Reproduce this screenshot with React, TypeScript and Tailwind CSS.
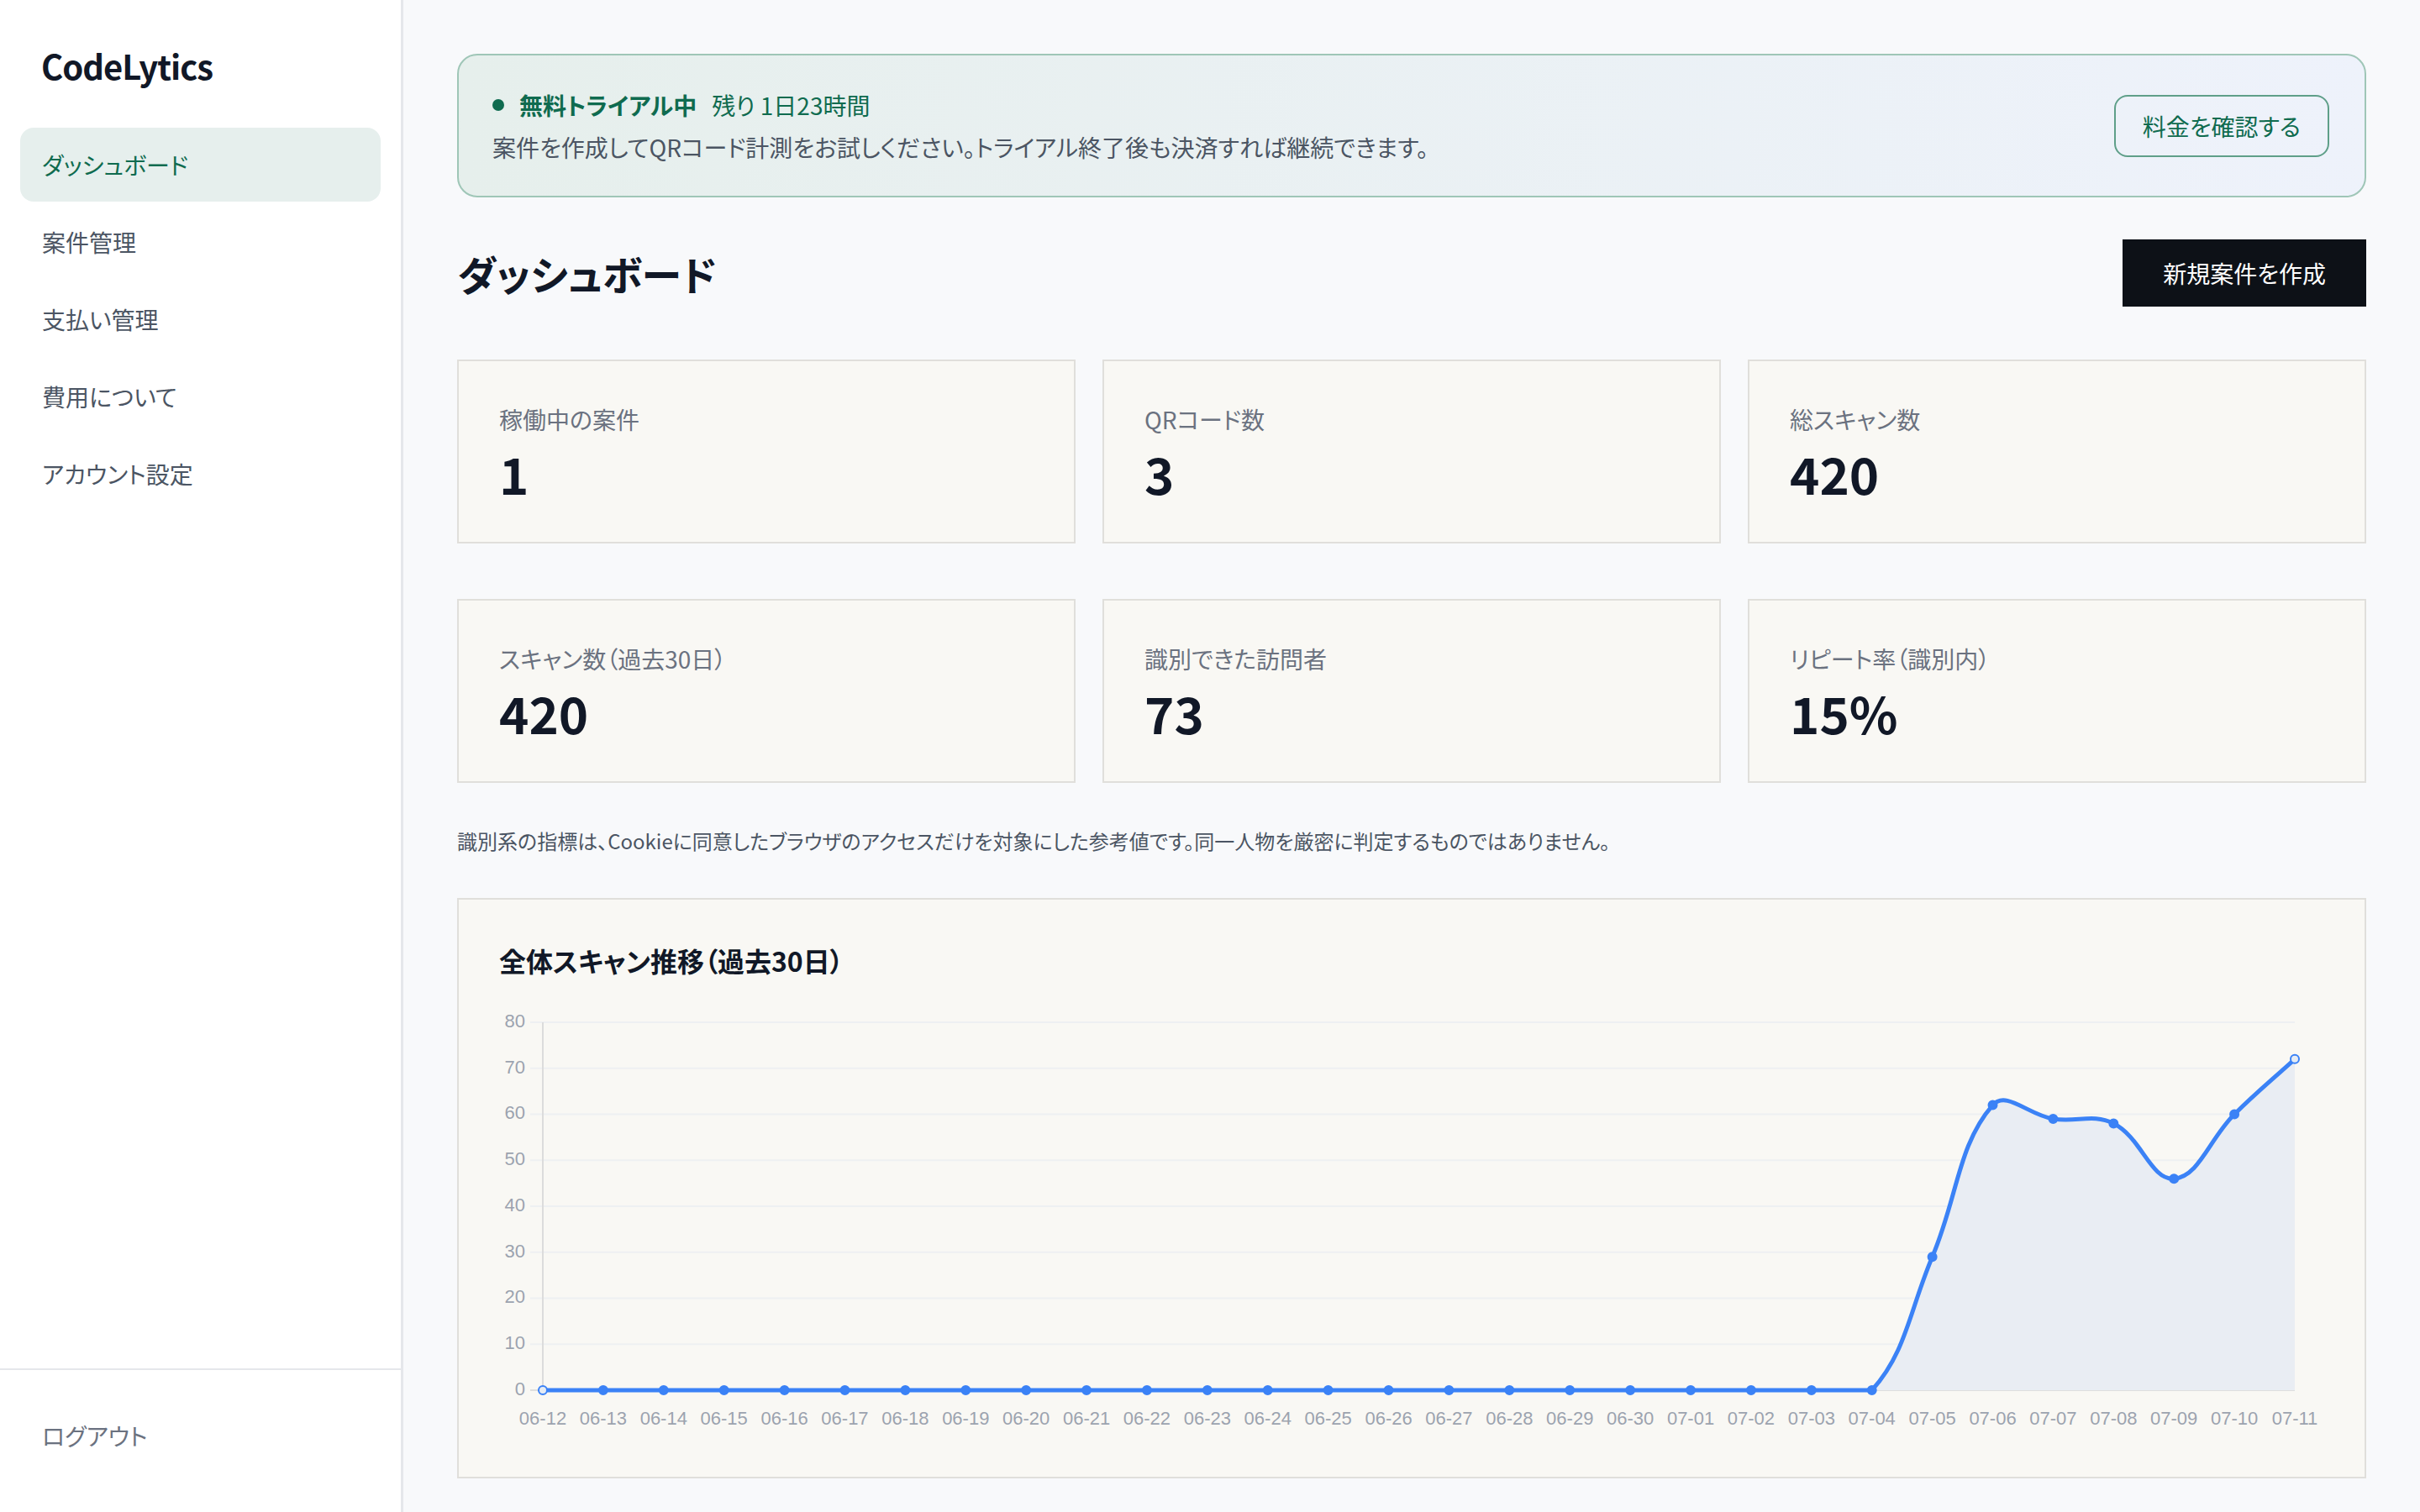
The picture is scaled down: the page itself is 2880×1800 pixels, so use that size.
import React from "react";

const navItems = ["ダッシュボード", "案件管理", "支払い管理", "費用について", "アカウント設定"];

const stats = [
  { label: "稼働中の案件", value: "1" },
  { label: "QRコード数", value: "3" },
  { label: "総スキャン数", value: "420" },
];

const stats30 = [
  { label: "スキャン数（過去30日）", value: "420" },
  { label: "識別できた訪問者", value: "73" },
  { label: "リピート率（識別内）", value: "15%" },
];

const dates = [
  "06-12", "06-13", "06-14", "06-15", "06-16", "06-17", "06-18", "06-19", "06-20", "06-21",
  "06-22", "06-23", "06-24", "06-25", "06-26", "06-27", "06-28", "06-29", "06-30", "07-01",
  "07-02", "07-03", "07-04", "07-05", "07-06", "07-07", "07-08", "07-09", "07-10", "07-11",
];
const values = [
  0, 0, 0, 0, 0, 0, 0, 0, 0, 0, 0, 0, 0, 0, 0, 0, 0, 0, 0, 0, 0, 0, 0, 29, 62, 59, 58, 46, 60, 72,
];

type Pt = { x: number; y: number };

function ScanChart() {
  const W = 2172;
  const H = 511;
  const x0 = 52;
  const x1 = 2137;
  const yTop = 18;
  const yBot = 456;
  const step = (x1 - x0) / (values.length - 1);
  const toY = (v: number) => yBot - (v / 80) * (yBot - yTop);
  const pts: Pt[] = values.map((v, i) => ({ x: x0 + i * step, y: toY(v) }));

  // same spline as chart.js (tension 0.4, capped to the chart area)
  const clampY = (y: number) => Math.min(yBot, Math.max(yTop, y));
  const cps = pts.map((p, i) => {
    const a = pts[i - 1] ?? p;
    const b = pts[i + 1] ?? p;
    const d01 = Math.hypot(p.x - a.x, p.y - a.y);
    const d12 = Math.hypot(b.x - p.x, b.y - p.y);
    const s01 = d01 + d12 === 0 ? 0 : d01 / (d01 + d12);
    const s12 = d01 + d12 === 0 ? 0 : d12 / (d01 + d12);
    const fa = 0.4 * s01;
    const fb = 0.4 * s12;
    return {
      prev: { x: p.x - fa * (b.x - a.x), y: clampY(p.y - fa * (b.y - a.y)) },
      next: { x: p.x + fb * (b.x - a.x), y: clampY(p.y + fb * (b.y - a.y)) },
    };
  });

  let line = `M ${pts[0].x} ${pts[0].y}`;
  for (let i = 1; i < pts.length; i++) {
    const c1 = cps[i - 1].next;
    const c2 = cps[i].prev;
    line += ` C ${c1.x} ${c1.y} ${c2.x} ${c2.y} ${pts[i].x} ${pts[i].y}`;
  }
  const area = `${line} L ${x1} ${yBot} L ${x0} ${yBot} Z`;

  return (
    <svg width={W} height={H} viewBox={`0 0 ${W} ${H}`} className="block">
      {[0, 10, 20, 30, 40, 50, 60, 70, 80].map((v) => (
        <g key={v}>
          <line x1={37} x2={x1} y1={toY(v)} y2={toY(v)} stroke={v === 0 ? "#dedede" : "#eef0f2"} strokeWidth={2} />
          <text
            x={31}
            y={toY(v)}
            textAnchor="end"
            dominantBaseline="middle"
            fill="#9ca3af"
            fontSize={22}
            fontFamily="'Liberation Sans', Arial, sans-serif"
          >
            {v}
          </text>
        </g>
      ))}
      <line x1={x0} x2={x0} y1={yTop} y2={yBot} stroke="#dcdcdc" strokeWidth={2} />
      <path d={area} fill="#e9edf3" />
      <path d={line} fill="none" stroke="#3b82f6" strokeWidth={5} strokeLinejoin="round" />
      {pts.map((p, i) => (
        <circle
          key={i}
          cx={p.x}
          cy={p.y}
          r={5}
          fill={i === 0 || i === pts.length - 1 ? "#e6ecf4" : "#3b82f6"}
          stroke="#3b82f6"
          strokeWidth={2}
        />
      ))}
      {dates.map((d, i) => (
        <text
          key={d}
          x={x0 + i * step}
          y={491}
          textAnchor="middle"
          dominantBaseline="middle"
          fill="#9ca3af"
          fontSize={22}
          fontFamily="'Liberation Sans', Arial, sans-serif"
        >
          {d}
        </text>
      ))}
    </svg>
  );
}

function StatCard({ label, value }: { label: string; value: string }) {
  return (
    <div className="h-[219px] border-2 border-[#e0dfdb] bg-[#f9f8f4] px-12 pt-12">
      <p className="text-[28px] leading-[42px] text-[#6b7280]">{label}</p>
      <p className="mt-2 text-[60px] font-bold leading-[70px] text-[#111827]">{value}</p>
    </div>
  );
}

export default function App() {
  return (
    <div className="flex h-[1800px] overflow-hidden font-['Noto_Sans_CJK_JP','Noto_Sans',sans-serif] [font-feature-settings:'palt']">
      {/* Sidebar */}
      <aside className="flex w-[480px] shrink-0 flex-col border-r-[3px] border-[#e5e7eb] bg-white">
        <div className="px-6">
          <div className="mt-[50px] h-[56px] pl-[25px] text-[40px] font-bold leading-[56px] tracking-tight text-[#111827]">
            CodeLytics
          </div>
          <nav className="mt-[46px] flex flex-col gap-1">
            {navItems.map((item, i) => (
              <a
                key={item}
                className={
                  i === 0
                    ? "flex h-[88px] items-center rounded-2xl bg-[#e6efed] pl-[26px] text-[28px] text-[#0f6b4f]"
                    : "flex h-[88px] items-center rounded-2xl pl-[26px] text-[28px] text-[#4b5563]"
                }
              >
                {item}
              </a>
            ))}
          </nav>
        </div>
        <div className="mt-auto border-t-2 border-[#e5e7eb] px-6 pt-[34px] pb-[47px]">
          <button className="flex h-[88px] items-center pl-[26px] text-[28px] text-[#6b7280]">ログアウト</button>
        </div>
      </aside>

      {/* Main */}
      <main className="flex-1 bg-[#f8f9fb] px-16 pt-16 pb-10">
        {/* Trial banner */}
        <div className="flex h-[171px] items-center justify-between rounded-[24px] border-2 border-[#9fc6b7] bg-linear-to-r from-[#e6efec] to-[#eef2fb] pl-[40px] pr-[42px]">
          <div>
            <div className="flex items-center text-[28px] leading-[42px] text-[#0f6b4f]">
              <span className="mr-[18px] h-[14px] w-[14px] rounded-full bg-[#0f6b4f]" />
              <span className="font-bold">無料トライアル中</span>
              <span className="ml-[18px]">残り 1日23時間</span>
            </div>
            <p className="mt-2 text-[28px] leading-[42px] text-[#4b5563]">
              案件を作成してQRコード計測をお試しください。トライアル終了後も決済すれば継続できます。
            </p>
          </div>
          <button className="flex h-[74px] items-center rounded-2xl border-2 border-[#5f9f89] px-[32px] text-[28px] text-[#0f6b4f]">
            料金を確認する
          </button>
        </div>

        {/* Heading */}
        <div className="mt-[50px] flex h-[80px] items-center justify-between">
          <h1 className="text-[48px] font-bold leading-[64px] text-[#111827]">ダッシュボード</h1>
          <button className="flex h-[80px] items-center bg-[#0d1117] px-12 text-[28px] text-white">
            新規案件を作成
          </button>
        </div>

        {/* Stats */}
        <div className="mt-[63px] grid grid-cols-3 gap-8">
          {stats.map((s) => (
            <StatCard key={s.label} {...s} />
          ))}
        </div>
        <div className="mt-[66px] grid grid-cols-3 gap-8">
          {stats30.map((s) => (
            <StatCard key={s.label} {...s} />
          ))}
        </div>

        <p className="mt-[51px] text-[24px] leading-[36px] text-[#4b5563]">
          識別系の指標は、Cookieに同意したブラウザのアクセスだけを対象にした参考値です。同一人物を厳密に判定するものではありません。
        </p>

        {/* Chart */}
        <div className="mt-[50px] border-2 border-[#e0dfdb] bg-[#f9f8f4] p-12">
          <h2 className="text-[32px] font-bold leading-[48px] text-[#111827]">全体スキャン推移（過去30日）</h2>
          <div className="mt-8">
            <ScanChart />
          </div>
        </div>
      </main>
    </div>
  );
}
